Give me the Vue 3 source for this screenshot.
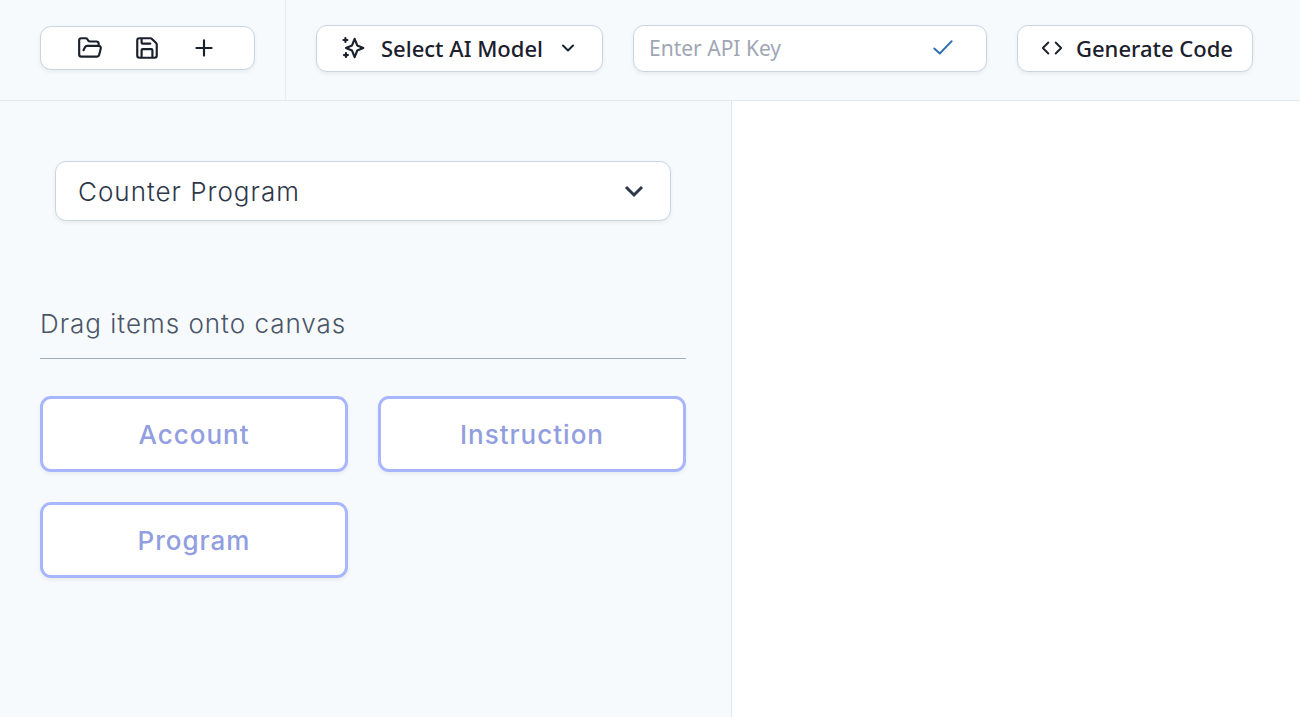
<script setup>
import { ref } from 'vue'

const apiKey = ref('')
const program = ref('Counter Program')
const items = ['Account', 'Instruction', 'Program']
</script>

<template>
  <div class="app">
    <header class="topbar">
      <div class="files">
        <div class="file-group">
          <button type="button" aria-label="Open">
            <svg class="icon" viewBox="0 0 24 24"><path d="m6 14 1.5-2.9A2 2 0 0 1 9.24 10H20a2 2 0 0 1 1.94 2.5l-1.54 6a2 2 0 0 1-1.95 1.5H4a2 2 0 0 1-2-2V5a2 2 0 0 1 2-2h3.9a2 2 0 0 1 1.69.9l.81 1.2a2 2 0 0 0 1.67.9H18a2 2 0 0 1 2 2v2" /></svg>
          </button>
          <button type="button" aria-label="Save">
            <svg class="icon" viewBox="0 0 24 24"><path d="M15.2 3a2 2 0 0 1 1.4.6l3.8 3.8a2 2 0 0 1 .6 1.4V19a2 2 0 0 1-2 2H5a2 2 0 0 1-2-2V5a2 2 0 0 1 2-2zM17 21v-7a1 1 0 0 0-1-1H8a1 1 0 0 0-1 1v7M7 3v4a1 1 0 0 0 1 1h7" /></svg>
          </button>
          <button type="button" aria-label="New">
            <svg class="icon" viewBox="0 0 24 24"><path d="M5 12h14M12 5v14" /></svg>
          </button>
        </div>
      </div>
      <div class="tools">
        <button type="button" class="tool model">
          <svg class="icon" viewBox="0 0 24 24"><path d="M13.500 3.500l2.400 6.100 5.600 2.400-5.600 2.400-2.400 6.100-2.400-6.100L5.500 12l5.600-2.400zM5 2.800v3.600M3.200 4.600h3.600M5.500 16.700v3.600M3.700 18.500h3.600" /></svg>
          <span>Select AI Model</span>
          <svg class="chevron" viewBox="0 0 16 16"><path d="M3 5.500l5 5 5-5" /></svg>
        </button>
        <div class="tool key">
          <input v-model="apiKey" type="text" placeholder="Enter API Key" aria-label="API key">
          <button type="button" aria-label="Confirm API key">
            <svg class="check" viewBox="0 0 24 24"><path d="M2.500 12.500l6 5.500L21.500 4.500" /></svg>
          </button>
        </div>
        <button type="button" class="tool generate">
          <svg class="code" viewBox="0 0 24 24"><path d="M8 6l-6 6 6 6M16 6l6 6-6 6" /></svg>
          <span>Generate Code</span>
        </button>
      </div>
    </header>
    <div class="workspace">
      <aside class="panel">
        <div class="program">
          <select v-model="program" aria-label="Program">
            <option>Counter Program</option>
          </select>
          <svg class="caret" viewBox="0 0 20 20"><path d="M2 6l8 8 8-8" /></svg>
        </div>
        <h2>Drag items onto canvas</h2>
        <div class="items">
          <button v-for="item in items" :key="item" type="button" draggable="true">{{ item }}</button>
        </div>
      </aside>
      <main class="canvas"></main>
    </div>
  </div>
</template>

<style>
body {
  margin: 0;
}
</style>

<style scoped>
.app {
  display: flex;
  flex-direction: column;
  min-height: 100vh;
  background: #f7fafc;
  color: #1a202c;
  font-family: "Noto Sans", sans-serif;
}
.app * {
  box-sizing: border-box;
}
button {
  padding: 0;
  border: 0;
  background: none;
  color: inherit;
  font: inherit;
  cursor: pointer;
}
svg {
  display: block;
  flex: none;
  fill: none;
  stroke: currentColor;
  stroke-width: 2;
  stroke-linecap: round;
  stroke-linejoin: round;
}
.icon {
  width: 26px;
  height: 26px;
}
.topbar {
  display: flex;
  height: 101px;
  border-bottom: 1px solid #e2e8f0;
}
.files {
  flex: none;
  padding: 26px 30px 0 40px;
  border-right: 1px solid #e8edf3;
}
.file-group {
  display: flex;
  align-items: center;
  justify-content: center;
  gap: 31px;
  width: 215px;
  height: 44px;
  padding-right: 1px;
}
.file-group,
.tool {
  border: 1px solid #cbd5e0;
  border-radius: 11px;
  background: #fff;
  box-shadow: 0 2px 4px rgba(0, 0, 0, 0.06);
}
.tools {
  display: flex;
  flex: 1;
  gap: 30px;
  min-width: 0;
  padding: 25px 47px 0 30px;
}
.tool {
  display: flex;
  flex: none;
  align-items: center;
  height: 47px;
  padding-bottom: 1px;
  font-size: 22px;
  font-weight: 500;
  line-height: 28px;
  white-space: nowrap;
}
.model {
  width: 287px;
  padding-right: 26px;
  padding-left: 23px;
}
.model span {
  margin-left: 15px;
}
.chevron {
  width: 16px;
  height: 16px;
  margin-left: auto;
}
.key {
  flex: 1;
  min-width: 0;
  padding-right: 32px;
  padding-left: 15px;
}
.key input {
  flex: 1;
  min-width: 0;
  padding: 0;
  border: 0;
  outline: 0;
  background: none;
  color: inherit;
  font: inherit;
  font-size: 21px;
  font-weight: 400;
}
.key input::placeholder {
  color: #a0a6b4;
  opacity: 1;
}
.check {
  width: 22px;
  height: 22px;
  color: #2b6cb0;
}
.generate {
  gap: 13px;
  width: 236px;
  padding-left: 23px;
}
.code {
  width: 22px;
  height: 22px;
}
.workspace {
  display: flex;
  flex: 1;
}
.panel {
  flex: none;
  width: 732px;
  padding: 60px 45px 40px 40px;
  border-right: 1px solid #e2e8f0;
  font-family: Inter, sans-serif;
  font-size: 26px;
  font-weight: 300;
  letter-spacing: 1px;
}
.program {
  position: relative;
  margin: 0 15px;
}
select {
  display: block;
  width: 100%;
  height: 60px;
  padding: 0 60px 0 22px;
  border: 1px solid #cbd5e0;
  border-radius: 11px;
  appearance: none;
  background: #fff;
  box-shadow: 0 2px 4px rgba(0, 0, 0, 0.06);
  color: #2d3748;
  font: inherit;
  letter-spacing: inherit;
}
.caret {
  position: absolute;
  top: 20px;
  right: 27px;
  width: 20px;
  height: 20px;
  color: #2d3748;
  stroke-width: 3;
  stroke-linecap: butt;
  stroke-linejoin: miter;
  pointer-events: none;
}
h2 {
  margin: 83px 0 37px;
  padding-bottom: 14px;
  border-bottom: 1px solid #a0aec0;
  color: #4a5568;
  font-size: 26px;
  font-weight: 300;
  line-height: 40px;
}
.items {
  display: grid;
  grid-template-columns: 1fr 1fr;
  gap: 30px;
}
.items button {
  height: 76px;
  border: 3px solid #a8b5ff;
  border-radius: 11px;
  background: #fff;
  box-shadow: 0 2px 4px rgba(0, 0, 0, 0.06);
  color: #919ee0;
  font-weight: 500;
  letter-spacing: inherit;
}
.canvas {
  flex: 1;
  background: #fff;
}
</style>
